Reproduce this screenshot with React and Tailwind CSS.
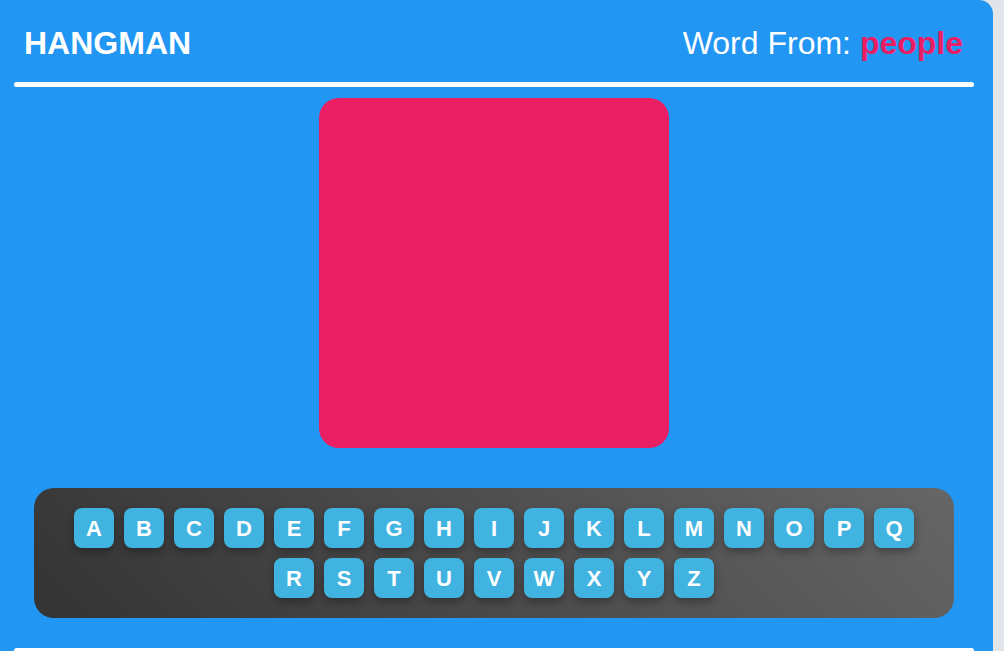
const letters = "ABCDEFGHIJKLMNOPQRSTUVWXYZ".split("");

function Keyboard() {
  return (
    <div className="ml-[34px] mr-[39px] mt-[40px] h-[130px] rounded-[20px] bg-[linear-gradient(45deg,#333333,#666666)] px-10 py-5">
      <div className="flex flex-wrap justify-center gap-[10px]">
        {letters.map((l) => (
          <button
            key={l}
            className="flex h-10 w-10 items-center justify-center rounded-lg bg-[#41b3e0] text-[22px] font-bold text-white shadow-[0_4px_8px_rgba(0,0,0,0.3)]"
          >
            {l}
          </button>
        ))}
      </div>
    </div>
  );
}

export default function App() {
  return (
    <div className="flex h-[651px] w-[1004px] overflow-hidden bg-[#e1e4e8] font-['Liberation_Sans',Arial,sans-serif]">
      <div className="w-[993px] shrink-0 rounded-tr-[14px] bg-[#2196f3] pt-[21px]">
        <header className="flex h-[44px] items-center justify-between pl-6 pr-[30px] text-white">
          <h1 className="text-[32px] font-bold leading-none">HANGMAN</h1>
          <h2 className="text-[32px] leading-none">
            Word From: <span className="font-bold text-[#e91e63]">people</span>
          </h2>
        </header>
        <div className="ml-[14px] mt-[17px] h-[5px] w-[960px] rounded-full bg-white" />
        <div className="mt-[11px] flex justify-center pr-[5px]">
          <div className="h-[350px] w-[350px] rounded-[20px] bg-[#e91e63]" />
        </div>
        <Keyboard />
        <div className="ml-[14px] mt-[30px] h-[5px] w-[960px] rounded-full bg-white" />
      </div>
    </div>
  );
}
